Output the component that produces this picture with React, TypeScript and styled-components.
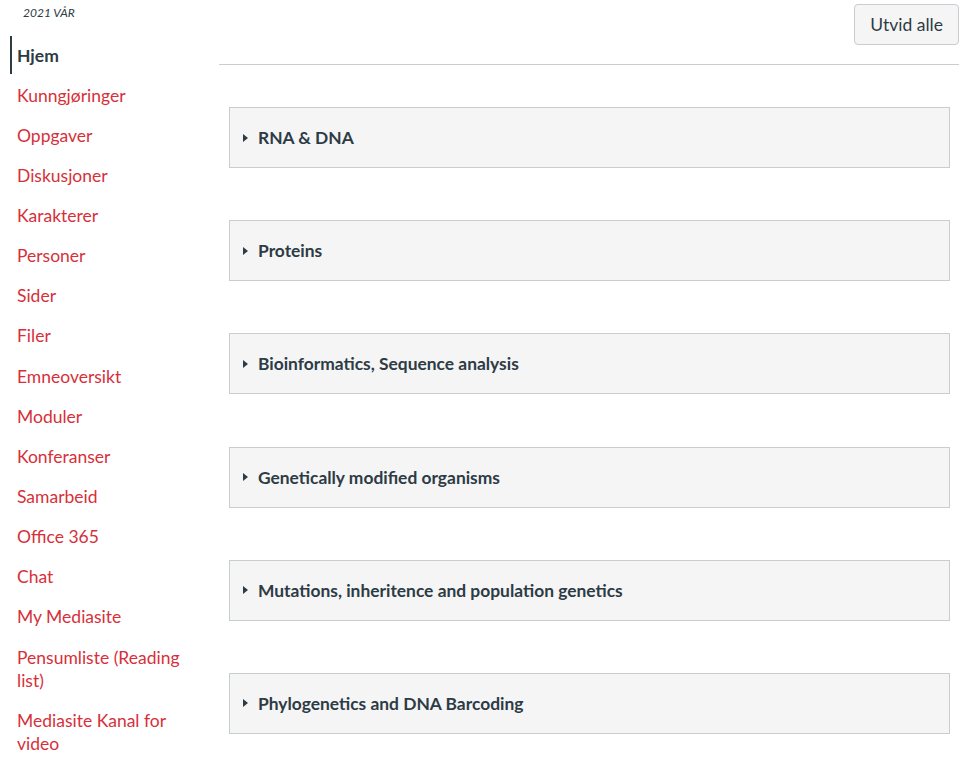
import React from "react";
import styled, { createGlobalStyle } from "styled-components";

const Global = createGlobalStyle`
  html, body { margin: 0; padding: 0; background: #fff; }
  body { font-family: Lato, "Open Sans", sans-serif; color: #2d3b45; }
`;

const Page = styled.div`
  display: flex;
  width: 975px;
  min-height: 767px;
`;

const Sidebar = styled.nav`
  width: 219px;
  flex-shrink: 0;
  padding: 5px 0 0 10px;
  box-sizing: border-box;
`;

const Term = styled.div`
  font-size: 12px;
  font-style: italic;
  color: #2d3b45;
  padding-left: 13px;
  height: 31px;
  line-height: 15px;
`;

const NavList = styled.ul`
  list-style: none;
  margin: 0;
  padding: 0;
`;

const NavItem = styled.li<{ $active?: boolean }>`
  margin-bottom: 2.15px;
  padding: 7.5px 30px 7.5px 5px;
  border-left: 2px solid ${(p) => (p.$active ? "#2d3b45" : "transparent")};
  font-size: 17.5px;
  line-height: 23px;
  font-weight: ${(p) => (p.$active ? 700 : 400)};
  color: ${(p) => (p.$active ? "#2d3b45" : "#d6303a")};
`;

const Main = styled.main`
  flex: 1;
  padding-right: 16px;
  box-sizing: border-box;
`;

const Header = styled.div`
  display: flex;
  justify-content: flex-end;
  padding: 4px 0 19px;
  border-bottom: 1px solid #c7cdd1;
`;

const Button = styled.button`
  font-family: Lato, "Open Sans", sans-serif;
  font-size: 17.5px;
  color: #2d3b45;
  background: #f5f5f5;
  border: 1px solid #c7cdd1;
  border-radius: 4px;
  height: 41px;
  padding: 0 15px;
`;

const Modules = styled.div`
  display: flex;
  flex-direction: column;
  gap: 52.2px;
  padding: 42px 9px 0 10px;
`;

const Module = styled.div`
  display: flex;
  align-items: center;
  gap: 10px;
  height: 61px;
  box-sizing: border-box;
  padding-left: 13px;
  background: #f5f5f5;
  border: 1px solid #c7cdd1;
  font-size: 17.4px;
  font-weight: 700;
  color: #2d3b45;
`;

const Caret = styled.span`
  width: 0;
  height: 0;
  border-top: 4px solid transparent;
  border-bottom: 4px solid transparent;
  border-left: 5.5px solid #2d3b45;
`;

const nav = [
  "Hjem",
  "Kunngjøringer",
  "Oppgaver",
  "Diskusjoner",
  "Karakterer",
  "Personer",
  "Sider",
  "Filer",
  "Emneoversikt",
  "Moduler",
  "Konferanser",
  "Samarbeid",
  "Office 365",
  "Chat",
  "My Mediasite",
  "Pensumliste (Reading list)",
  "Mediasite Kanal for video",
];

const modules = [
  "RNA & DNA",
  "Proteins",
  "Bioinformatics, Sequence analysis",
  "Genetically modified organisms",
  "Mutations, inheritence and population genetics",
  "Phylogenetics and DNA Barcoding",
];

export default function App() {
  return (
    <Page>
      <Global />
      <Sidebar>
        <Term>2021 VÅR</Term>
        <NavList>
          {nav.map((n, i) => (
            <NavItem key={n} $active={i === 0}>
              {n}
            </NavItem>
          ))}
        </NavList>
      </Sidebar>
      <Main>
        <Header>
          <Button>Utvid alle</Button>
        </Header>
        <Modules>
          {modules.map((m) => (
            <Module key={m}>
              <Caret />
              {m}
            </Module>
          ))}
        </Modules>
      </Main>
    </Page>
  );
}
